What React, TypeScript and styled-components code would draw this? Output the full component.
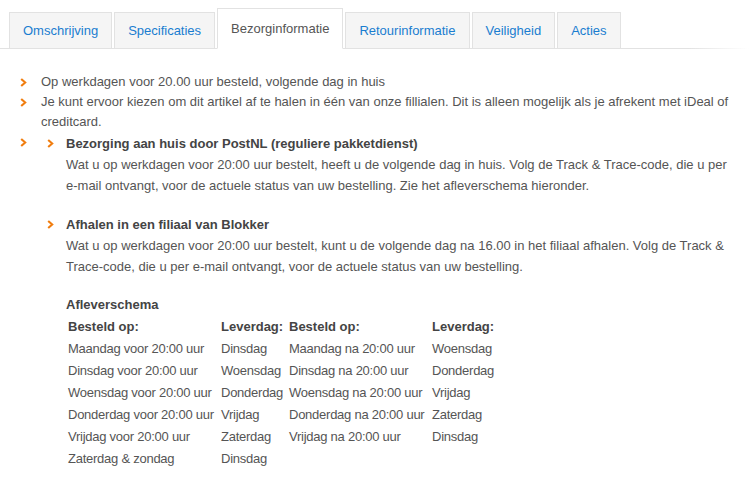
import styled, { createGlobalStyle } from 'styled-components';

const GlobalStyle = createGlobalStyle`
  body {
    margin: 0;
    background: #fff;
    font-family: "Liberation Sans", Arial, sans-serif;
  }
`;

const Page = styled.div`
  width: 751px;
  font-size: 13px;
  color: #555;
`;

const TabBar = styled.div`
  position: relative;
  display: flex;
  align-items: flex-end;
  gap: 2px;
  height: 49px;
  padding-left: 9px;
  box-sizing: border-box;

  &::after {
    content: '';
    position: absolute;
    left: 0;
    right: 2px;
    bottom: 0;
    height: 1px;
    background: linear-gradient(to right, #e2e2e2 92%, rgba(226, 226, 226, 0));
  }
`;

const Tab = styled.div<{ $active?: boolean }>`
  position: relative;
  z-index: 1;
  display: flex;
  align-items: center;
  justify-content: center;
  box-sizing: border-box;
  height: ${({ $active }) => ($active ? '41px' : '36px')};
  margin-bottom: ${({ $active }) => ($active ? '0' : '1px')};
  padding: 0 13px;
  background: ${({ $active }) => ($active ? '#fff' : '#f5f5f5')};
  border: 1px solid #e2e2e2;
  border-bottom: ${({ $active }) => ($active ? '1px solid #fff' : '0')};
  color: ${({ $active }) => ($active ? '#555' : '#1a7dd0')};
  font-size: 13px;
  white-space: nowrap;
  cursor: pointer;
`;

const Content = styled.div`
  padding: 23px 10px 0 0;
`;

const List = styled.ul`
  list-style: none;
  margin: 0;
  padding: 0 0 0 41px;
`;

const Item = styled.li<{ $spaced?: boolean }>`
  position: relative;
  line-height: 20px;
  margin-top: ${({ $spaced }) => ($spaced ? '1px' : '0')};
`;

const Bullet = styled.span<{ $left: number; $top: number }>`
  position: absolute;
  left: ${({ $left }) => $left}px;
  top: ${({ $top }) => $top}px;
  width: 7px;
  height: 9px;
  display: block;
  line-height: 0;

  svg {
    display: block;
  }
`;

const SubList = styled.ul`
  list-style: none;
  margin: 0;
  padding: 0 0 0 25px;
`;

const SubItem = styled.li`
  position: relative;
  line-height: 21px;
  & + & {
    margin-top: 18px;
  }
`;

const Heading = styled.div`
  font-weight: bold;
  color: #444;
`;

const Schedule = styled.div`
  margin-top: 17px;
  padding-left: 25px;
`;

const ScheduleTitle = styled.div`
  font-weight: bold;
  color: #444;
  line-height: 21px;
`;

const Grid = styled.div`
  display: grid;
  grid-template-columns: 153px 68px 143px auto;
  padding-left: 2px;
  margin-top: 1px;
`;

const Cell = styled.div<{ $head?: boolean }>`
  line-height: 22px;
  white-space: nowrap;
  letter-spacing: ${({ $head }) => ($head ? '0' : '-0.25px')};
  font-weight: ${({ $head }) => ($head ? 'bold' : 'normal')};
  color: ${({ $head }) => ($head ? '#444' : '#555')};
`;

const Chevron = ({ left, top }: { left: number; top: number }) => (
  <Bullet $left={left} $top={top}>
    <svg width="7" height="9" viewBox="0 0 7 9">
      <path d="M1.2 1 L5.2 4.5 L1.2 8" fill="none" stroke="#f07d0f" strokeWidth="2.1" />
    </svg>
  </Bullet>
);

const tabs = ['Omschrijving', 'Specificaties', 'Bezorginformatie', 'Retourinformatie', 'Veiligheid', 'Acties'];

const rows: [string, string, string, string][] = [
  ['Maandag voor 20:00 uur', 'Dinsdag', 'Maandag na 20:00 uur', 'Woensdag'],
  ['Dinsdag voor 20:00 uur', 'Woensdag', 'Dinsdag na 20:00 uur', 'Donderdag'],
  ['Woensdag voor 20:00 uur', 'Donderdag', 'Woensdag na 20:00 uur', 'Vrijdag'],
  ['Donderdag voor 20:00 uur', 'Vrijdag', 'Donderdag na 20:00 uur', 'Zaterdag'],
  ['Vrijdag voor 20:00 uur', 'Zaterdag', 'Vrijdag na 20:00 uur', 'Dinsdag'],
  ['Zaterdag & zondag', 'Dinsdag', '', ''],
];

const App: React.FC = () => {
  return (
    <Page>
      <GlobalStyle />
      <TabBar>
        {tabs.map((t) => (
          <Tab key={t} $active={t === 'Bezorginformatie'}>
            {t}
          </Tab>
        ))}
      </TabBar>
      <Content>
        <List>
          <Item>
            <Chevron left={-21} top={6} />
            Op werkdagen voor 20.00 uur besteld, volgende dag in huis
          </Item>
          <Item>
            <Chevron left={-21} top={6} />
            Je kunt ervoor kiezen om dit artikel af te halen in één van onze fillialen. Dit is alleen mogelijk als je
            afrekent met iDeal of creditcard.
          </Item>
          <Item $spaced>
            <Chevron left={-21} top={5} />
            <SubList>
              <SubItem>
                <Chevron left={-19} top={6} />
                <Heading>Bezorging aan huis door PostNL (reguliere pakketdienst)</Heading>
                Wat u op werkdagen voor 20:00 uur bestelt, heeft u de volgende dag in huis. Volg de Track &amp;
                Trace-code, die u per e-mail ontvangt, voor de actuele status van uw bestelling. Zie het afleverschema
                hieronder.
              </SubItem>
              <SubItem>
                <Chevron left={-19} top={6} />
                <Heading>Afhalen in een filiaal van Blokker</Heading>
                Wat u op werkdagen voor 20:00 uur bestelt, kunt u de volgende dag na 16.00 in het filiaal afhalen. Volg
                de Track &amp; Trace-code, die u per e-mail ontvangt, voor de actuele status van uw bestelling.
              </SubItem>
            </SubList>
            <Schedule>
              <ScheduleTitle>Afleverschema</ScheduleTitle>
              <Grid>
                <Cell $head>Besteld op:</Cell>
                <Cell $head>Leverdag:</Cell>
                <Cell $head>Besteld op:</Cell>
                <Cell $head>Leverdag:</Cell>
                {rows.map((r, i) => r.map((c, j) => <Cell key={`${i}-${j}`}>{c}</Cell>))}
              </Grid>
            </Schedule>
          </Item>
        </List>
      </Content>
    </Page>
  );
};

export default App;
